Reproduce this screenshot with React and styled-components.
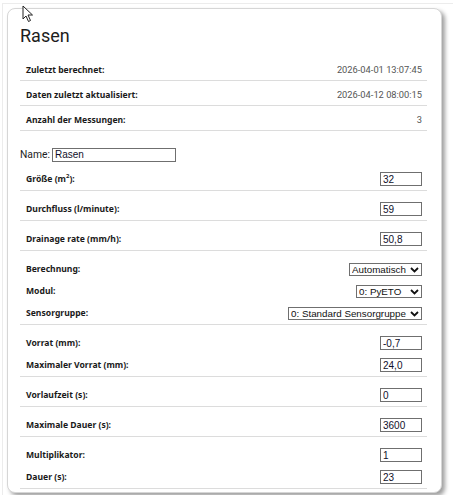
import styled, { createGlobalStyle } from 'styled-components'

const GlobalStyle = createGlobalStyle`
  html, body {
    margin: 0;
    padding: 0;
    background: #fff;
  }
  body {
    font-family: Roboto, "Liberation Sans", sans-serif;
    color: #222;
  }
`

const Frame = styled.div`
  position: relative;
  margin: 3px 0 0 2px;
  padding: 4px 0 0 4px;
  border-left: 1px solid #ececec;
  border-top: 1px solid #ececec;
  height: 492px;
  box-sizing: border-box;
`

const Card = styled.div`
  width: 435px;
  box-sizing: border-box;
  border: 1px solid #d6d6d6;
  border-radius: 8px;
  background: #fff;
  box-shadow: 3px 3px 4px rgba(0, 0, 0, 0.38);
  padding: 16px 14px 3px 12px;
`

const Title = styled.h2`
  margin: 0 0 9px 0;
  font-family: Roboto, sans-serif;
  font-weight: 400;
  font-size: 18px;
  line-height: 22px;
  color: #1d1d1d;
`

const InfoRow = styled.div`
  display: flex;
  justify-content: space-between;
  align-items: flex-end;
  height: 25px;
  padding: 0 5px 4px 6px;
  box-sizing: border-box;
  border-bottom: 1px solid #dcdcdc;
  line-height: 12px;
`

const Label = styled.span`
  font-family: "Noto Sans", "Open Sans", sans-serif;
  font-weight: 700;
  font-size: 8.6px;
  color: #1a1a1a;

  sup {
    font-size: 6px;
    line-height: 0;
  }
`

const Value = styled.span`
  font-family: Roboto, sans-serif;
  font-size: 9.3px;
  color: #555;
`

const NameRow = styled.div`
  display: flex;
  align-items: center;
  gap: 2px;
  padding-top: 17px;
  height: 30px;
  box-sizing: border-box;
  font-family: Roboto, sans-serif;
  font-size: 10.3px;
  color: #1d1d1d;
`

const Group = styled.div`
  padding-top: 7px;
  border-bottom: 1px solid #dcdcdc;
`

const Row = styled.div`
  display: flex;
  justify-content: space-between;
  align-items: center;
  height: 22px;
  padding: 0 5px 0 6px;
`

const Input = styled.input`
  box-sizing: border-box;
  width: ${(p) => p.$w || 42}px;
  height: 14px;
  margin: 0;
  padding: 0 2px;
  border: 1px solid #6f6f6f;
  border-radius: 0;
  font-family: "Liberation Sans", Arial, sans-serif;
  font-size: 10px;
  color: #10102a;
  background: #fff;
  outline: none;
`

const SelectWrap = styled.span`
  position: relative;
  display: block;
  flex: none;
  width: ${(p) => p.$w}px;
  height: 13px;
`

const Select = styled.select`
  appearance: none;
  display: block;
  box-sizing: border-box;
  width: 100%;
  height: 13px;
  margin: 0;
  padding: 0 10px 0 2px;
  border: 1px solid #6f6f6f;
  border-radius: 0;
  background: #fff;
  font-family: "Liberation Sans", Arial, sans-serif;
  font-size: 9.8px;
  line-height: 11px;
  color: #111;
  outline: none;
`

const Chevron = styled.svg`
  position: absolute;
  right: 3px;
  top: 4px;
  width: 9px;
  height: 6px;
  pointer-events: none;
`

const Cursor = styled.svg`
  position: absolute;
  left: 19px;
  top: 1px;
  width: 12px;
  height: 18px;
`

const Dropdown = ({ w, value }) => (
  <SelectWrap $w={w}>
    <Select defaultValue={value}>
      <option>{value}</option>
    </Select>
    <Chevron viewBox="0 0 9 6">
      <path d="M1 1 L4.5 4.5 L8 1" fill="none" stroke="#111" strokeWidth="1.8" />
    </Chevron>
  </SelectWrap>
)

const Field = ({ label, value, children }) => (
  <Row>
    <Label>{label}</Label>
    {children || <Input defaultValue={value} />}
  </Row>
)

const info = [
  ['Zuletzt berechnet:', '2026-04-01 13:07:45'],
  ['Daten zuletzt aktualisiert:', '2026-04-12 08:00:15'],
  ['Anzahl der Messungen:', '3'],
]

export default function App() {
  return (
    <>
      <GlobalStyle />
      <Frame>
        <Card>
          <Title>Rasen</Title>
          {info.map(([k, v]) => (
            <InfoRow key={k}>
              <Label>{k}</Label>
              <Value>{v}</Value>
            </InfoRow>
          ))}
          <NameRow>
            Name: <Input $w={124} defaultValue="Rasen" />
          </NameRow>
          <Group>
            <Field
              label={
                <>
                  Größe (m<sup>2</sup>):
                </>
              }
              value="32"
            />
          </Group>
          <Group>
            <Field label="Durchfluss (l/minute):" value="59" />
          </Group>
          <Group>
            <Field label="Drainage rate (mm/h):" value="50,8" />
          </Group>
          <Group>
            <Field label="Berechnung:">
              <Dropdown w={73} value="Automatisch" />
            </Field>
            <Field label="Modul:">
              <Dropdown w={66} value="0: PyETO" />
            </Field>
            <Field label="Sensorgruppe:">
              <Dropdown w={134} value="0: Standard Sensorgruppe" />
            </Field>
          </Group>
          <Group>
            <Field label="Vorrat (mm):" value="-0,7" />
            <Field label="Maximaler Vorrat (mm):" value="24,0" />
          </Group>
          <Group>
            <Field label="Vorlaufzeit (s):" value="0" />
          </Group>
          <Group>
            <Field label="Maximale Dauer (s):" value="3600" />
          </Group>
          <Group>
            <Field label="Multiplikator:" value="1" />
            <Field label="Dauer (s):" value="23" />
          </Group>
        </Card>
        <Cursor viewBox="0 0 12 18">
          <path
            d="M1 1 L1 14 L4 11 L6.5 16.5 L8.5 15.5 L6 10 L10.5 10 Z"
            fill="#fff"
            stroke="#222"
            strokeWidth="1"
            strokeLinejoin="round"
          />
        </Cursor>
      </Frame>
    </>
  )
}
